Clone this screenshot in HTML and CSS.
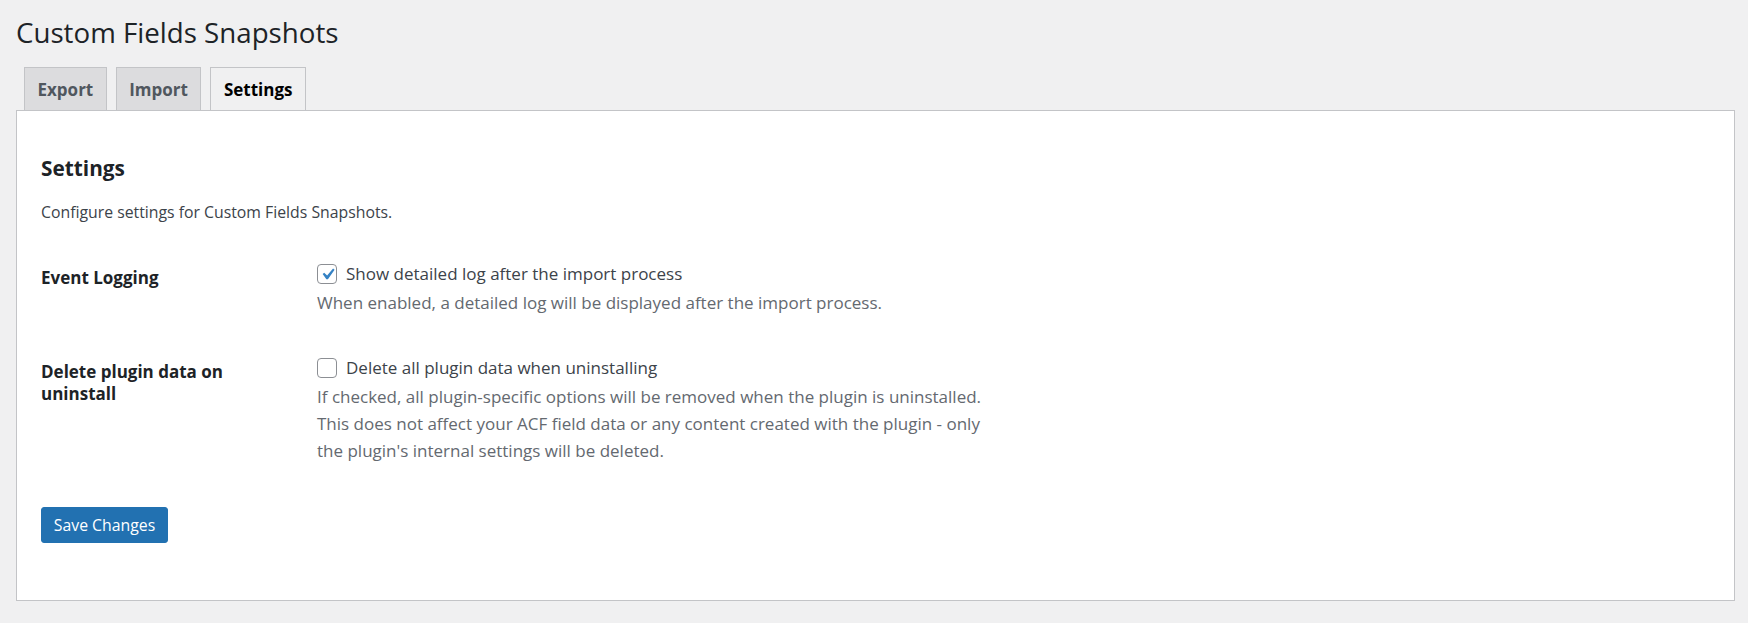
FILE: index.html
```html
<!DOCTYPE html>
<html lang="en">
<head>
<meta charset="utf-8">
<title>Custom Fields Snapshots</title>
<link rel="stylesheet" href="styles.css">
</head>
<body>
<div class="wrap">
  <h1 class="title">Custom Fields Snapshots</h1>
  <nav class="tabs">
    <a class="tab" href="#">Export</a>
    <a class="tab" href="#">Import</a>
    <a class="tab tab-active" href="#">Settings</a>
  </nav>
  <div class="panel">
    <h2 class="panel-title">Settings</h2>
    <p class="intro">Configure settings for Custom Fields Snapshots.</p>
    <div class="form">
      <div class="row">
        <div class="label">Event Logging</div>
        <div class="field">
          <label class="check">
            <span class="box"><svg viewBox="0 0 20 20" width="20" height="20"><path d="M14.83 4.89l1.34.94-5.81 8.38H9.02L5.78 9.67l1.34-1.25 2.57 2.4z"/></svg></span>
            <span>Show detailed log after the import process</span>
          </label>
          <p class="desc">When enabled, a detailed log will be displayed after the import process.</p>
        </div>
      </div>
      <div class="row row-second">
        <div class="label">Delete plugin data on<br>uninstall</div>
        <div class="field">
          <label class="check">
            <span class="box"></span>
            <span>Delete all plugin data when uninstalling</span>
          </label>
          <p class="desc">If checked, all plugin-specific options will be removed when the plugin is uninstalled.<br>This does not affect your ACF field data or any content created with the plugin - only<br>the plugin's internal settings will be deleted.</p>
        </div>
      </div>
    </div>
    <button class="btn" type="button">Save Changes</button>
  </div>
</div>
</body>
</html>
```

FILE: styles.css
```css
* { box-sizing: border-box; }
html, body { margin: 0; padding: 0; }
body {
  background: #f0f0f1;
  color: #3c434a;
  font-family: "Open Sans", "Noto Sans", sans-serif;
  font-size: 15.8px;
}
.wrap {
  padding: 0 13px 0 16px;
}
.title {
  margin: 0;
  padding-top: 14px;
  height: 67px;
  font-size: 27.7px;
  font-weight: 400;
  line-height: 36px;
  color: #1d2327;
}
.tabs {
  display: flex;
  gap: 9px;
  padding-left: 8px;
  height: 43px;
}
.tab {
  display: flex;
  align-items: center;
  justify-content: center;
  height: 43px;
  padding: 1px 12.5px 0;
  border: 1px solid #c3c4c7;
  border-bottom: none;
  background: #dcdcde;
  color: #50575e;
  font-size: 17px;
  font-weight: 700;
  text-decoration: none;
}
.tab-active {
  background: #f0f0f1;
  color: #000;
}
.panel {
  background: #fff;
  border: 1px solid #c3c4c7;
  padding: 0 24px 57px 24px;
}
.panel-title {
  margin: 43px 0 0;
  font-size: 20.8px;
  font-weight: 700;
  line-height: 29px;
  color: #1d2327;
}
.intro {
  margin: 17px 0 0;
  line-height: 24px;
}
.form {
  margin-top: 40px;
  font-size: 17px;
}
.row {
  display: grid;
  grid-template-columns: 276px 1fr;
}
.row-second {
  margin-top: 41.5px;
}
.label {
  font-weight: 700;
  line-height: 22px;
  padding-top: 3px;
  color: #1d2327;
}
.check {
  display: flex;
  align-items: center;
  gap: 9px;
  line-height: 20px;
}
.box {
  width: 20px;
  height: 20px;
  border: 1px solid #8c8f94;
  border-radius: 4px;
  background: #fff;
  display: flex;
  align-items: center;
  justify-content: center;
  flex: none;
}
.box svg {
  width: 23px;
  height: 23px;
  fill: #3582c4;
  flex: none;
}
.desc {
  margin: 5px 0 0;
  color: #646970;
  line-height: 27.3px;
}
.btn {
  display: block;
  margin-top: 42px;
  height: 36px;
  width: 127px;
  padding: 0;
  background: #2271b1;
  border: 1px solid #2271b1;
  border-radius: 3px;
  color: #fff;
  font-family: inherit;
  font-size: 15.8px;
}
```
